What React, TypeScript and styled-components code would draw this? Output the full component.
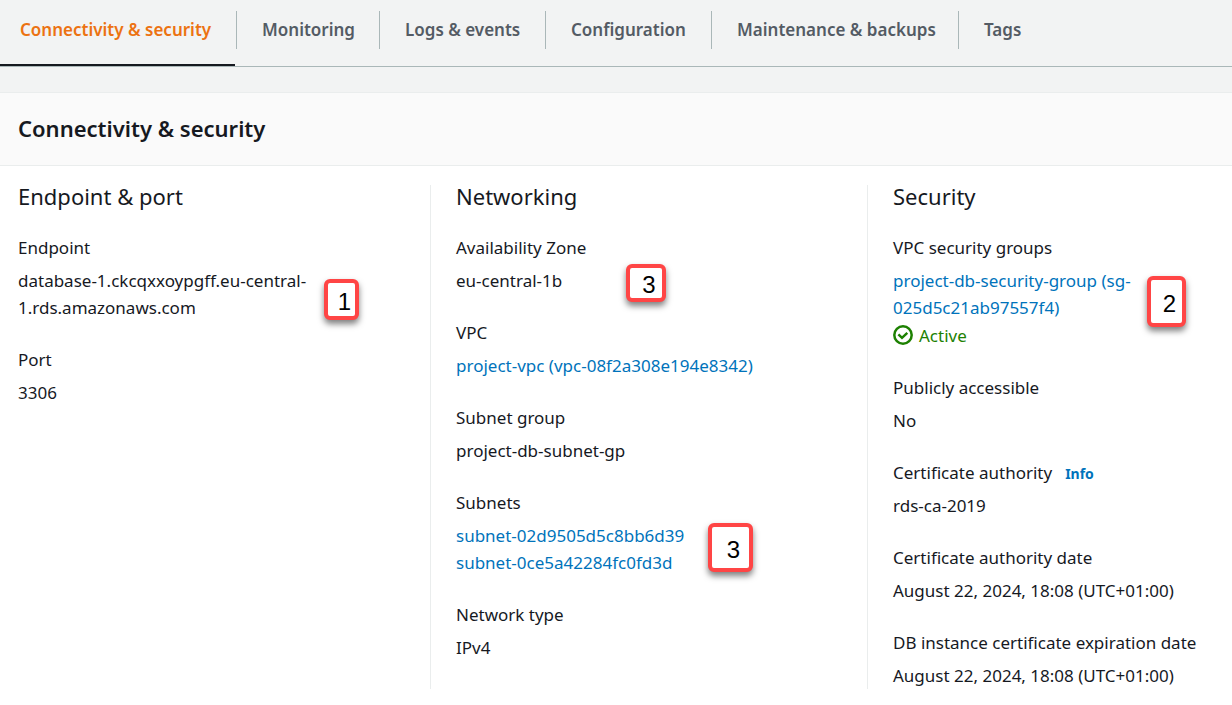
import React from "react";
import styled, { createGlobalStyle } from "styled-components";

const GlobalStyle = createGlobalStyle`
  *, *::before, *::after { box-sizing: border-box; }
  body {
    margin: 0;
    background: #ffffff;
    color: #16191f;
    font-family: "Noto Sans", "Open Sans", sans-serif;
    font-size: 17px;
    line-height: 27px;
  }
`;

const Page = styled.main`
  background: #f2f3f3;
`;

const TabBar = styled.div`
  display: grid;
  grid-template-columns: 236px 143px 166px 166px 247px auto;
  justify-content: start;
  height: 67px;
  background: #f2f3f3;
  border-bottom: 1px solid #aab7b8;
`;

const Tab = styled.button<{ $active?: boolean }>`
  display: flex;
  align-items: flex-start;
  padding: 11px 0 0;
  border: 0;
  border-bottom: 2px solid ${(p) => (p.$active ? "#16191f" : "transparent")};
  background: none;
  color: ${(p) => (p.$active ? "#ec7211" : "#545b64")};
  font: inherit;
  font-weight: 600;
  white-space: nowrap;
  cursor: pointer;

  &:first-child {
    margin-right: 1px;
  }
`;

const TabLabel = styled.span`
  flex: 1;
  height: 38px;
  padding-left: 25px;
  line-height: 38px;
  text-align: left;

  ${Tab}:first-child & {
    padding-left: 20px;
  }

  ${Tab}:not(:first-child) & {
    border-left: 1px solid #aab7b8;
  }
`;

const PanelHeader = styled.header`
  margin-top: 25px;
  padding: 21px 18px 23px;
  background: #fafafa;
  border-top: 1px solid #eaeded;
  border-bottom: 1px solid #eaeded;
`;

const PanelTitle = styled.h2`
  margin: 0;
  font-size: 22px;
  font-weight: 600;
  line-height: 28px;
`;

const Columns = styled.div`
  display: grid;
  grid-template-columns: 430fr 437fr 365fr;
  padding: 19px 0 16px;
  background: #ffffff;
`;

const Column = styled.section`
  min-width: 0;
  padding: 0 18px;

  & + & {
    padding-left: 25px;
    border-left: 1px solid #eaeded;
  }
`;

const ColumnTitle = styled.h3`
  margin: 0 0 27px;
  font-size: 22px;
  font-weight: 400;
  line-height: 22px;
`;

const Fields = styled.dl`
  display: flex;
  flex-direction: column;
  gap: 25px;
  margin: 0;
`;

const Field = styled.div`
  position: relative;
`;

const Label = styled.dt`
  margin-bottom: 6px;
`;

const Value = styled.dd`
  margin: 0;
`;

const Link = styled.a`
  display: block;
  color: #0073bb;
  text-decoration: none;
`;

const InfoLink = styled.a`
  margin-left: 13px;
  color: #0073bb;
  font-size: 14px;
  font-weight: 700;
  line-height: 14px;
  text-decoration: none;
`;

const Status = styled.div`
  display: flex;
  align-items: center;
  gap: 6px;
  height: 28px;
  color: #1d8102;
`;

const Callout = styled.span<{ $x: number; $y: number; $w: number; $h: number }>`
  position: absolute;
  left: ${(p) => p.$x}px;
  top: ${(p) => p.$y}px;
  display: flex;
  align-items: center;
  justify-content: center;
  width: ${(p) => p.$w}px;
  height: ${(p) => p.$h}px;
  padding: 4px 0 0 6px;
  border: 4px solid #ff4545;
  border-radius: 6px;
  background: #ffffff;
  box-shadow: 0 4px 6px rgba(0, 0, 0, 0.5);
  color: #000000;
  font-family: "Liberation Sans", Arial, sans-serif;
  font-size: 24px;
  line-height: 24px;
`;

const CheckIcon = () => (
  <svg width="20" height="20" viewBox="0 0 20 20" fill="none" stroke="currentColor" strokeWidth="2.5" aria-hidden="true">
    <circle cx="10" cy="10" r="8.7" />
    <path d="M5.4 9.4l3.6 3.4 5.3-5" />
  </svg>
);

const tabs = ["Connectivity & security", "Monitoring", "Logs & events", "Configuration", "Maintenance & backups", "Tags"];

export default function App() {
  return (
    <Page>
      <GlobalStyle />
      <TabBar role="tablist">
        {tabs.map((tab, i) => (
          <Tab key={tab} type="button" role="tab" aria-selected={i === 0} $active={i === 0}>
            <TabLabel>{tab}</TabLabel>
          </Tab>
        ))}
      </TabBar>
      <PanelHeader>
        <PanelTitle>Connectivity &amp; security</PanelTitle>
      </PanelHeader>
      <Columns>
        <Column>
          <ColumnTitle>Endpoint &amp; port</ColumnTitle>
          <Fields>
            <Field>
              <Label>Endpoint</Label>
              <Value>
                database-1.ckcqxxoypgff.eu-central-
                <br />
                1.rds.amazonaws.com
                <Callout $x={306} $y={45} $w={35} $h={41}>1</Callout>
              </Value>
            </Field>
            <Field>
              <Label>Port</Label>
              <Value>3306</Value>
            </Field>
          </Fields>
        </Column>
        <Column>
          <ColumnTitle>Networking</ColumnTitle>
          <Fields>
            <Field>
              <Label>Availability Zone</Label>
              <Value>
                eu-central-1b
                <Callout $x={170} $y={30} $w={40} $h={38}>3</Callout>
              </Value>
            </Field>
            <Field>
              <Label>VPC</Label>
              <Value><Link href="#vpc">project-vpc (vpc-08f2a308e194e8342)</Link></Value>
            </Field>
            <Field>
              <Label>Subnet group</Label>
              <Value>project-db-subnet-gp</Value>
            </Field>
            <Field>
              <Label>Subnets</Label>
              <Value>
                <Link href="#subnet-1">subnet-02d9505d5c8bb6d39</Link>
                <Link href="#subnet-2">subnet-0ce5a42284fc0fd3d</Link>
                <Callout $x={252} $y={34} $w={45} $h={49}>3</Callout>
              </Value>
            </Field>
            <Field>
              <Label>Network type</Label>
              <Value>IPv4</Value>
            </Field>
          </Fields>
        </Column>
        <Column>
          <ColumnTitle>Security</ColumnTitle>
          <Fields>
            <Field>
              <Label>VPC security groups</Label>
              <Value>
                <Link href="#security-group">
                  project-db-security-group (sg-
                  <br />
                  025d5c21ab97557f4)
                </Link>
                <Status><CheckIcon />Active</Status>
                <Callout $x={254} $y={42} $w={39} $h={51}>2</Callout>
              </Value>
            </Field>
            <Field>
              <Label>Publicly accessible</Label>
              <Value>No</Value>
            </Field>
            <Field>
              <Label>Certificate authority<InfoLink href="#info">Info</InfoLink></Label>
              <Value>rds-ca-2019</Value>
            </Field>
            <Field>
              <Label>Certificate authority date</Label>
              <Value>August 22, 2024, 18:08 (UTC+01:00)</Value>
            </Field>
            <Field>
              <Label>DB instance certificate expiration date</Label>
              <Value>August 22, 2024, 18:08 (UTC+01:00)</Value>
            </Field>
          </Fields>
        </Column>
      </Columns>
    </Page>
  );
}
